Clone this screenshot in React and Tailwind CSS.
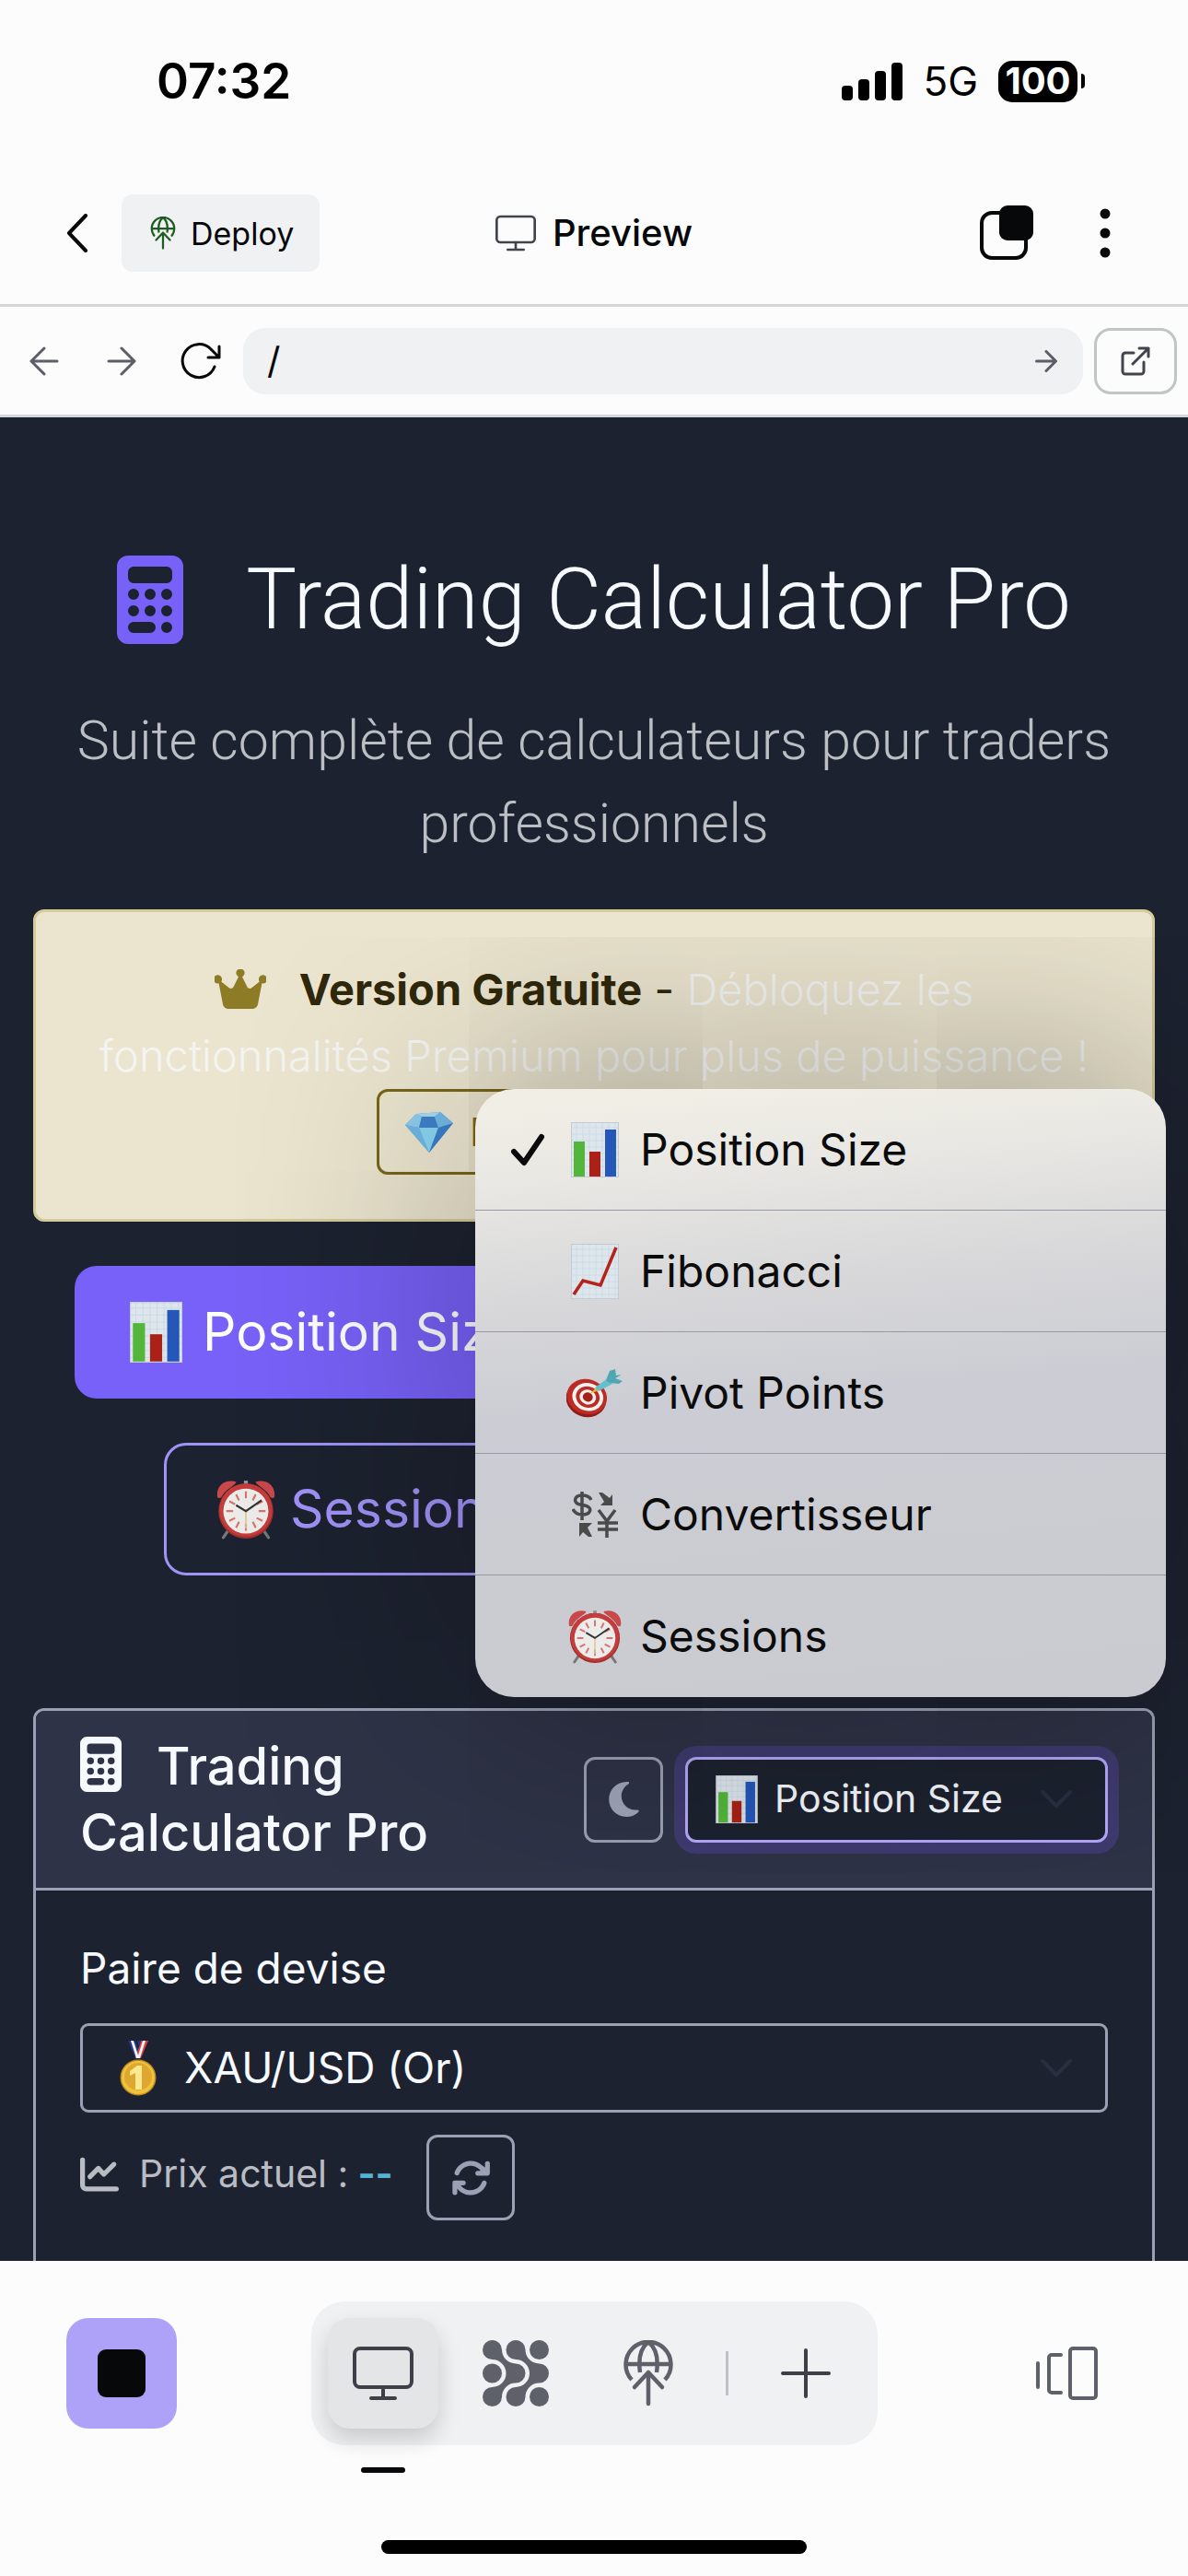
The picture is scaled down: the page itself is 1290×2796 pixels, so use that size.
import React from "react";

const FONT = "font-['Inter','Liberation_Sans',sans-serif]";

function DeployIcon({ className }) {
  return (
    <svg viewBox="0 0 54 72" className={className} fill="none" stroke="currentColor" strokeWidth="4.5" strokeLinecap="round" strokeLinejoin="round">
      <path d="M9 43a24.500 24.500 0 1 1 36 0" strokeLinecap="butt" />
      <path d="M18 35c-2-14 0-26 9-33 9 7 11 19 9 33M3 26h48" strokeLinecap="butt" />
      <path d="M12 51 27 35l15 16M27 35v34" />
    </svg>
  );
}

function MonitorIcon({ className, sw = 4 }) {
  return (
    <svg viewBox="0 0 66 60" className={className} fill="none" stroke="currentColor" strokeWidth={sw} strokeLinecap="round">
      <rect x="2" y="3" width="62" height="42" rx="6" />
      <path d="M33 45v12M20 57h26" />
    </svg>
  );
}

function ArrowRight({ className, sw = 3 }) {
  return (
    <svg viewBox="0 0 32 32" className={className} fill="none" stroke="currentColor" strokeWidth={sw} strokeLinecap="round" strokeLinejoin="round">
      <path d="M2 16h28M16 2l14 14-14 14" />
    </svg>
  );
}

function CalculatorIcon({ className }) {
  return (
    <svg viewBox="0 0 384 512" className={className} fill="currentColor" fillRule="evenodd">
      <path d="M64 0h256a64 64 0 0 1 64 64v384a64 64 0 0 1-64 64H64a64 64 0 0 1-64-64V64A64 64 0 0 1 64 0zM96 64a32 32 0 0 0-32 32v32a32 32 0 0 0 32 32h192a32 32 0 0 0 32-32V96a32 32 0 0 0-32-32zM96 192a32 32 0 1 0 0 64 32 32 0 0 0 0-64zM192 192a32 32 0 1 0 0 64 32 32 0 0 0 0-64zM288 192a32 32 0 1 0 0 64 32 32 0 0 0 0-64zM96 288a32 32 0 1 0 0 64 32 32 0 0 0 0-64zM192 288a32 32 0 1 0 0 64 32 32 0 0 0 0-64zM288 288a32 32 0 1 0 0 64 32 32 0 0 0 0-64zM96 384a32 32 0 0 0 0 64h96a32 32 0 0 0 0-64zM288 384a32 32 0 1 0 0 64 32 32 0 0 0 0-64z" />
    </svg>
  );
}

function GridPaper() {
  return (
    <>
      <rect width="52" height="60" fill="#dfe6eb" />
      <path d="M6 0v60M13 0v60M20 0v60M27 0v60M34 0v60M41 0v60M48 0v60M0 6h52M0 13h52M0 20h52M0 27h52M0 34h52M0 41h52M0 48h52M0 55h52" stroke="#c9dbe8" strokeWidth="1" />
      <rect x=".5" y=".5" width="51" height="59" fill="none" stroke="#c3cbd1" />
    </>
  );
}

function BarsEmoji({ className }) {
  return (
    <svg viewBox="0 0 52 60" className={className}>
      <GridPaper />
      <rect x="3" y="21" width="12" height="38" fill="#53b63b" />
      <rect x="20" y="32" width="12" height="27" fill="#a92117" />
      <rect x="37" y="8" width="12" height="51" fill="#2457b8" />
    </svg>
  );
}

function ChartEmoji({ className }) {
  return (
    <svg viewBox="0 0 52 60" className={className}>
      <GridPaper />
      <path d="M3 55 13 40l19 5L49 4" fill="none" stroke="#b5231a" strokeWidth="3.5" />
    </svg>
  );
}

function TargetEmoji({ className }) {
  return (
    <svg viewBox="0 0 62 54" className={className}>
      <g transform="rotate(18 22 32)">
        <ellipse cx="22" cy="34" rx="22" ry="19" fill="#8d1d1a" />
        <ellipse cx="22" cy="31" rx="22" ry="19" fill="#bd2b25" />
        <ellipse cx="23" cy="31" rx="17" ry="15" fill="#f4f1ef" />
        <ellipse cx="23" cy="31" rx="13" ry="11.500" fill="#bd2b25" />
        <ellipse cx="23" cy="31" rx="9" ry="8" fill="#f4f1ef" />
        <ellipse cx="23" cy="31" rx="5.500" ry="5" fill="#a51f1b" />
      </g>
      <path d="m25 28 10-9 3 4z" fill="#e3b92c" />
      <path d="M31 21 45 11l5 6-15 8z" fill="#62bfcb" />
      <path d="m43 13 4-10 6-2 1 7 6-1-7 4 8 3-4 3-10-1z" fill="#4fa7b2" />
    </svg>
  );
}

function ClockEmoji({ className }) {
  return (
    <svg viewBox="0 0 60 62" className={className}>
      <path d="m13 51-6 9M47 51l6 9" stroke="#777" strokeWidth="3" strokeLinecap="round" />
      <path d="M28 2h4v8h-4z" fill="#8f9aa0" />
      <path d="M1 19C-1 8 8 0 20 3c1 3-12 8-15 16-2 1-3 1-4 0zM59 19C61 8 52 0 40 3c-1 3 12 8 15 16 2 1 3 1 4 0z" fill="#c9484a" />
      <circle cx="30" cy="33" r="28" fill="#a32f2d" />
      <circle cx="30" cy="32" r="27" fill="#c43c3b" />
      <circle cx="30" cy="33" r="23" fill="#ececea" />
      <g stroke="#d9726e" strokeWidth="2">
        <path d="M30 13v7M30 46v7M10 33h7M43 33h7M20 16l3 6M37 44l3 6M40 16l-3 6M23 44l-3 6M13 23l6 3M41 40l6 3M47 23l-6 3M19 40l-6 3" />
      </g>
      <path d="M30 33v18" stroke="#e0c28e" strokeWidth="1.500" />
      <path d="m20 27 10 6 16-11" fill="none" stroke="#333" strokeWidth="2" />
    </svg>
  );
}

function GemEmoji({ className }) {
  return (
    <svg viewBox="0 0 52 46" className={className}>
      <path d="M12 3 38 1l14 12-26 32L0 15z" fill="#5aa5dd" />
      <path d="M12 3 38 1l-6 5H18z" fill="#a9dcf4" />
      <path d="m12 3 6 3-3 12L0 15z" fill="#8fcdf0" />
      <path d="M18 6h14l4 12H15z" fill="#3f82c9" />
      <path d="m38 1-6 5 4 12 16-5z" fill="#74b9e6" />
      <path d="m15 18 11 27L0 15z" fill="#6fb9e4" />
      <path d="M15 18h21L26 45z" fill="#8bd5f2" />
      <path d="m36 18 16-5-26 32z" fill="#3b7fc8" />
    </svg>
  );
}

function MedalEmoji({ className }) {
  return (
    <svg viewBox="0 0 42 60" className={className}>
      <path d="M9 0h8l6 19h-6z" fill="#23348f" />
      <path d="M31 0h-8l-6 19h6z" fill="#d8403f" />
      <path d="M12 0h3l6 19h-3zM25 0h3l-6 19h-3z" fill="#f2f2f4" />
      <path d="m23 0-2 7-2-7z" fill="#23348f" />
      <circle cx="20" cy="40" r="19.500" fill="#c08a26" />
      <circle cx="20" cy="40" r="18" fill="#eec53a" />
      <circle cx="20" cy="39" r="15" fill="#e0a730" />
      <path d="M24 27v26h-7V35l-6 3v-5l8-6z" fill="#fae98e" />
    </svg>
  );
}

function ExchangeEmoji({ className }) {
  return (
    <svg viewBox="0 0 50 50" className={className} fill="none" stroke="#4a4a4a" strokeWidth="3.500">
      <path d="M21 9c-2-4-6-5-10-5-9 0-10 9-2 10l5 1c9 2 7 10-3 10-5 0-8-2-10-6M11 0v31" />
      <path d="m29 20 9 12 9-12M38 32v18M28 34h22M28 41h22" />
      <path d="M29 1h4l8 6 3-4v12H31l4-4zM22 49h-4l-6-5-4 5V34h14l-5 5z" fill="#4a4a4a" stroke="none" />
    </svg>
  );
}

function StatusBar() {
  return (
    <div className="flex h-44 items-center justify-between pr-28 pl-[170px] text-black">
      <span className="text-[53px] leading-none font-semibold">07:32</span>
      <div className="flex items-center gap-[22px]">
        <svg viewBox="0 0 66 42" className="h-[42px] w-[66px]" fill="currentColor">
          <rect x="0" y="26" width="12" height="16" rx="4" />
          <rect x="18" y="19" width="12" height="23" rx="4" />
          <rect x="36" y="10" width="12" height="32" rx="4" />
          <rect x="54" y="1" width="12" height="41" rx="4" />
        </svg>
        <span className="text-[44px] leading-none">5G</span>
        <div className="flex items-center gap-1">
          <span className="flex h-[45px] w-[86px] items-center justify-center rounded-[15px] bg-black text-[40px] leading-none font-bold text-white">100</span>
          <span className="h-4 w-1 rounded-r-full bg-black" />
        </div>
      </div>
    </div>
  );
}

function TopBar() {
  return (
    <header className="grid h-[157px] grid-cols-[1fr_auto_1fr] items-center border-b-[3px] border-[#d4d6d7] px-[72px] text-[#07080a]">
      <div className="flex items-center gap-9">
        <button aria-label="Back">
          <svg viewBox="0 0 24 42" className="h-[42px] w-6" fill="none" stroke="currentColor" strokeWidth="4" strokeLinecap="round" strokeLinejoin="round">
            <path d="M21 2 3 21l18 19" />
          </svg>
        </button>
        <button className="flex h-[84px] items-center gap-4 rounded-xl bg-[#f0f1f3] pr-7 pl-[31px] text-[34px]">
          <DeployIcon className="h-9 w-7 text-[#1e5c20]" />
          Deploy
        </button>
      </div>
      <h1 className="flex items-center gap-[18px] text-[40px] font-medium">
        <MonitorIcon className="h-10 w-11 text-[#41444d]" />
        Preview
      </h1>
      <div className="flex items-center justify-end gap-[72px] pr-3">
        <button aria-label="Tabs">
          <svg viewBox="0 0 58 60" className="h-[60px] w-[58px]">
            <rect x="2" y="8" width="48" height="49" rx="11" fill="none" stroke="currentColor" strokeWidth="4" />
            <rect x="21" y="0" width="37" height="38" rx="9" fill="currentColor" />
          </svg>
        </button>
        <button aria-label="More">
          <svg viewBox="0 0 12 54" className="h-[54px] w-3" fill="currentColor">
            <circle cx="6" cy="6" r="5.500" />
            <circle cx="6" cy="27" r="5.500" />
            <circle cx="6" cy="48" r="5.500" />
          </svg>
        </button>
      </div>
    </header>
  );
}

function AddressBar() {
  return (
    <nav className="flex h-[120px] items-center border-b-[3px] border-[#d4d6d7] pr-3 pl-8 text-[#5b5e66]">
      <button aria-label="Previous page"><ArrowRight className="size-8 rotate-180" /></button>
      <button aria-label="Next page" className="ml-[52px]"><ArrowRight className="size-8" /></button>
      <button aria-label="Reload" className="ml-12 text-[#07080a]">
        <svg viewBox="0 0 44 40" className="h-10 w-11" fill="none" stroke="currentColor" strokeWidth="3" strokeLinecap="round" strokeLinejoin="round">
          <path d="M37 26A18 18 0 1 1 33 7l9 9M42 4v12H30" />
        </svg>
      </button>
      <div className="ml-6 flex h-[72px] flex-1 items-center rounded-[24px] bg-[#f0f1f3] pr-7 pl-[26px]">
        <input aria-label="Address" defaultValue="/" className="min-w-0 flex-1 bg-transparent text-[40px] text-[#07080a] outline-none" />
        <button aria-label="Go"><ArrowRight className="size-6" sw={4} /></button>
      </div>
      <button aria-label="Open in new window" className="ml-3 flex h-[72px] w-[90px] items-center justify-center rounded-[18px] border-[3px] border-[#c0c5c5] text-[#41444d]">
        <svg viewBox="0 0 32 32" className="size-8" fill="none" stroke="currentColor" strokeWidth="3" strokeLinecap="round" strokeLinejoin="round">
          <path d="M14 7H5a3 3 0 0 0-3 3v17a3 3 0 0 0 3 3h17a3 3 0 0 0 3-3V17M20 2h10v9M30 2 13 19" />
        </svg>
      </button>
    </nav>
  );
}

function Alert() {
  return (
    <section className="mt-12 rounded-[12px] border-[3px] border-[#d5cb9b] bg-[#ebe5cf] px-12 pt-12 pb-12 text-center text-[47px] leading-[72px] text-[#30280a]">
      <p>
        <svg viewBox="0 0 576 448" className="mr-9 inline-block h-[43px] w-14 align-[-4px] text-[#8e7b25]" fill="currentColor">
          <path d="M309 86a48 48 0 1 0-42 0l-57 115c-9 18-33 23-49 11L72 140a48 48 0 1 0-28 20l46 236c5 30 32 52 63 52h270c31 0 58-22 63-52l46-236a48 48 0 1 0-28-20l-89 72c-16 12-40 7-49-11z" />
        </svg>
        <strong className="font-bold">Version Gratuite</strong> - <span className="font-light text-[#f4f4f2]">Débloquez les fonctionnalités Premium pour plus de puissance !</span>
      </p>
      <button className="inline-flex h-[93px] w-[472px] items-center gap-[18px] rounded-[12px] border-[3px] border-[#796619] px-7 text-[42px] text-[#796619]">
        <GemEmoji className="h-[46px] w-[52px]" />
        Découvrir
      </button>
    </section>
  );
}

function Tabs() {
  return (
    <div className="mt-12 flex flex-wrap justify-center gap-x-6 gap-y-12 px-11 text-[57px]">
      <button className="flex h-36 basis-[520px] items-center gap-[22px] rounded-[24px] bg-[#7861f8] px-[60px] whitespace-nowrap text-white">
        <BarsEmoji className="h-[66px] w-[57px]" />
        Position Size
      </button>
      <button aria-label="Fibonacci" className="flex h-36 basis-[560px] items-center justify-center rounded-[24px] border-[3px] border-[#a192f8]">
        <ChartEmoji className="h-[66px] w-[57px]" />
      </button>
      <button className="flex h-36 basis-[440px] items-center gap-4 rounded-[24px] border-[3px] border-[#a192f8] px-[54px] text-[#a192f8]">
        <ClockEmoji className="h-[66px] w-16 shrink-0" />
        Sessions
      </button>
      <button aria-label="Pivot Points" className="flex h-36 basis-[470px] items-center justify-center rounded-[24px] border-[3px] border-[#a192f8]">
        <TargetEmoji className="h-[60px] w-16" />
      </button>
    </div>
  );
}

const OPTIONS = [
  { label: "Position Size", Icon: BarsEmoji, size: "h-[60px] w-[52px]", checked: true },
  { label: "Fibonacci", Icon: ChartEmoji, size: "h-[60px] w-[52px]" },
  { label: "Pivot Points", Icon: TargetEmoji, size: "h-[54px] w-[62px]" },
  { label: "Convertisseur", Icon: ExchangeEmoji, size: "size-[50px]" },
  { label: "Sessions", Icon: ClockEmoji, size: "h-[60px] w-[58px]" },
];

function Menu() {
  return (
    <ul role="listbox" aria-label="Calculateur" className="absolute right-6 bottom-[612px] z-10 w-[750px] divide-y divide-[#9798a5] overflow-hidden rounded-[42px] bg-[linear-gradient(175deg,#f1efe5_2%,#e8e7e3_15%,#d8d8da_32%,#cccdd4_50%,#cacbd0_100%)] text-[48px] text-[#0b0b0c] shadow-[0_0_280px_rgba(0,0,0,0.42)]">
      {OPTIONS.map(({ label, Icon, size, checked }) => (
        <li key={label} role="option" aria-selected={!!checked} className="flex h-[132px] items-center pl-[38px]">
          <span className="w-[53px]">
            {checked && (
              <svg viewBox="0 0 38 36" className="h-9 w-[38px]" fill="none" stroke="currentColor" strokeWidth="6" strokeLinecap="round" strokeLinejoin="round">
                <path d="m4 20 11 12L34 4" />
              </svg>
            )}
          </span>
          <span className="mr-[10px] flex w-[78px] justify-center"><Icon className={size} /></span>
          {label}
        </li>
      ))}
    </ul>
  );
}

function Chevron({ className }) {
  return (
    <svg viewBox="0 0 34 20" className={className} fill="none" stroke="#292f40" strokeWidth="4" strokeLinecap="round" strokeLinejoin="round">
      <path d="m2 2 15 15L32 2" />
    </svg>
  );
}

function CalculatorCard() {
  return (
    <section className="mt-36 flex flex-1 flex-col rounded-t-[12px] border-[3px] border-b-0 border-[#9ba1b4]">
      <header className="flex h-[195px] items-center justify-between rounded-t-[9px] border-b-[3px] border-[#9ba1b4] bg-[#2f3347] px-12 text-[#f6f9fd]">
        <h2 className="w-[440px] text-[56px] leading-[72px] font-medium">
          <CalculatorIcon className="mr-[38px] inline-block h-[60px] w-[45px] align-[-8px]" />
          Trading Calculator Pro
        </h2>
        <div className="flex items-center gap-6">
          <button aria-label="Mode sombre" className="flex h-[93px] w-[86px] items-center justify-center rounded-[12px] border-[3px] border-[#9ba1b4] text-[#a0a6b8]">
            <svg viewBox="0 0 384 448" className="h-[38px] w-[33px]" fill="currentColor">
              <path d="M224 0C100 0 0 100 0 224s100 224 224 224c60 0 115-24 155-63 5-5 6-12 3-18s-10-10-17-8c-9 1-19 2-29 2-97 0-176-79-176-177 0-66 36-124 90-154 6-4 9-10 8-17s-7-12-14-12c-7-1-13-1-20-1z" />
            </svg>
          </button>
          <div className="relative flex h-[93px] w-[459px] items-center gap-[18px] rounded-[12px] border-[3px] border-[#b4a9fa] bg-[#1d2230] pl-[30px] ring-[12px] ring-[#3f3b70]">
            <BarsEmoji className="h-[52px] w-[46px]" />
            <select aria-label="Calculateur" className="flex-1 appearance-none bg-transparent text-[41px] text-[#f6f9fd] outline-none">
              {OPTIONS.map(({ label }) => <option key={label}>{label}</option>)}
            </select>
            <Chevron className="pointer-events-none absolute right-9 h-5 w-[34px]" />
          </div>
        </div>
      </header>
      <div className="px-12 pt-12">
        <label htmlFor="pair" className="block text-[46px] leading-[72px] text-[#f6f9fd]">Paire de devise</label>
        <div className="relative mt-6 flex h-[97px] items-center gap-7 rounded-[9px] border-[3px] border-[#9ba1b4] pl-10">
          <MedalEmoji className="h-[60px] w-[42px]" />
          <select id="pair" className="flex-1 appearance-none bg-transparent text-[46px] text-[#f6f9fd] outline-none">
            <option>XAU/USD (Or)</option>
          </select>
          <Chevron className="pointer-events-none absolute right-9 h-5 w-[34px]" />
        </div>
        <div className="mt-6 flex items-center text-[41px] text-[#b9bcc3]">
          <p className="flex items-center pb-2">
            <svg viewBox="0 0 512 448" className="mr-[22px] h-[38px] w-[42px]" fill="currentColor">
              <path d="M64 32a32 32 0 0 0-64 0v336c0 44 36 80 80 80h400a32 32 0 0 0 0-64H80c-9 0-16-7-16-16z" />
              <path d="m130 256 112-112 72 80L448 92" fill="none" stroke="currentColor" strokeWidth="64" strokeLinecap="round" strokeLinejoin="round" />
            </svg>
            Prix actuel :
            <strong className="ml-[10px] font-bold text-[#54b4d3]">--</strong>
          </p>
          <button aria-label="Actualiser" className="ml-9 flex h-[93px] w-24 items-center justify-center rounded-[12px] border-[3px] border-[#9ba1b4] text-[#9ba1b4]">
            <svg viewBox="0 0 512 512" className="size-[42px]" fill="currentColor">
              <path d="M105 203c8-23 22-45 40-63 63-62 164-62 226 0l18 20h-38a32 32 0 0 0 0 64h128c18 0 32-14 32-32V64a32 32 0 0 0-64 0v51l-31-20C329 7 187 7 100 95c-25 24-43 54-55 86a32 32 0 0 0 60 22zM39 289c-13 4-23 14-23 31v128a32 32 0 0 0 64 0v-51l17 20c88 88 230 88 317 0 24-24 42-54 53-86a32 32 0 0 0-60-22c-8 23-22 45-40 63-62 62-164 62-226 0l-17-20h36a32 32 0 0 0 0-64z" />
            </svg>
          </button>
        </div>
      </div>
    </section>
  );
}

function AppsIcon() {
  const ribbon = "M21 10.500A15 15 0 0 0 36 25.500A10.500 10.500 0 0 1 36 46.500A15 15 0 0 0 21 61.500A10.500 10.500 0 1 1 10.500 51A15 15 0 0 0 10.500 21A10.500 10.500 0 1 1 21 10.500z";
  return (
    <svg viewBox="0 0 72 72" className="size-[72px]" fill="currentColor">
      <path d={ribbon} />
      <path d={ribbon} transform="translate(25.5 0)" />
      <circle cx="10.500" cy="36" r="10.500" />
      <circle cx="61.500" cy="10.500" r="10.500" />
      <circle cx="61.500" cy="61.500" r="10.500" />
    </svg>
  );
}

function BottomBar() {
  return (
    <footer className="relative z-20 flex h-[342px] flex-col justify-between bg-[#fcfcfc] pb-6 text-[#5e616a]">
      <div className="flex items-center justify-between px-[72px] pt-11">
        <button aria-label="Stop" className="flex size-[120px] items-center justify-center rounded-[24px] bg-[#aea2f8]">
          <span className="size-[52px] rounded-[9px] bg-[#07080a]" />
        </button>
        <div className="flex h-[156px] items-center rounded-[36px] bg-[#f0f1f3] px-[18px]">
          <div className="relative">
            <button aria-label="Preview" className="flex size-[120px] items-center justify-center rounded-[24px] bg-[#e4e5e7] text-[#3d4048] shadow-[0_12px_24px_rgba(0,0,0,0.16)]">
              <MonitorIcon className="h-[60px] w-[66px]" />
            </button>
            <span className="absolute top-[162px] left-9 h-[6px] w-12 rounded-full bg-[#07080a]" />
          </div>
          <button aria-label="Apps" className="ml-6 flex size-[120px] items-center justify-center"><AppsIcon /></button>
          <button aria-label="Deploy" className="ml-6 flex size-[120px] items-center justify-center"><DeployIcon className="h-[72px] w-[54px]" /></button>
          <span className="mx-6 h-12 w-[3px] bg-[#bfc1c5]" />
          <button aria-label="New tab" className="flex size-[120px] items-center justify-center">
            <svg viewBox="0 0 54 54" className="size-[54px] text-[#3d4048]" fill="none" stroke="currentColor" strokeWidth="4" strokeLinecap="round">
              <path d="M27 2v50M2 27h50" />
            </svg>
          </button>
        </div>
        <button aria-label="Tab layout" className="flex size-[120px] items-center justify-center">
          <svg viewBox="0 0 68 60" className="h-[60px] w-[68px]" fill="none" stroke="currentColor" strokeWidth="4" strokeLinecap="round" strokeLinejoin="round">
            <rect x="38" y="3" width="28" height="54" rx="3" />
            <path d="M28 10H18a3 3 0 0 0-3 3v35a3 3 0 0 0 3 3h10M3 19v26" />
          </svg>
        </button>
      </div>
      <div className="mx-auto h-[15px] w-[462px] rounded-full bg-black" />
    </footer>
  );
}

export default function App() {
  return (
    <div className={`flex min-h-screen flex-col bg-[#fcfcfc] ${FONT}`}>
      <StatusBar />
      <TopBar />
      <AddressBar />
      <main className="relative flex flex-1 flex-col overflow-hidden bg-[#1d2230] px-9 pt-36">
        <h2 className="flex items-center justify-center gap-[68px] font-['Roboto','Inter',sans-serif] text-[92px] leading-[108px] font-light text-[#f6f9fd]">
          <CalculatorIcon className="h-24 w-[72px] text-[#7861f8]" />
          Trading Calculator Pro
        </h2>
        <p className="mt-[54px] text-center font-['Roboto','Inter',sans-serif] text-[59px] leading-[90px] font-light text-[#bbbec3]">
          Suite complète de calculateurs pour traders professionnels
        </p>
        <Alert />
        <Tabs />
        <CalculatorCard />
        <Menu />
      </main>
      <BottomBar />
    </div>
  );
}
